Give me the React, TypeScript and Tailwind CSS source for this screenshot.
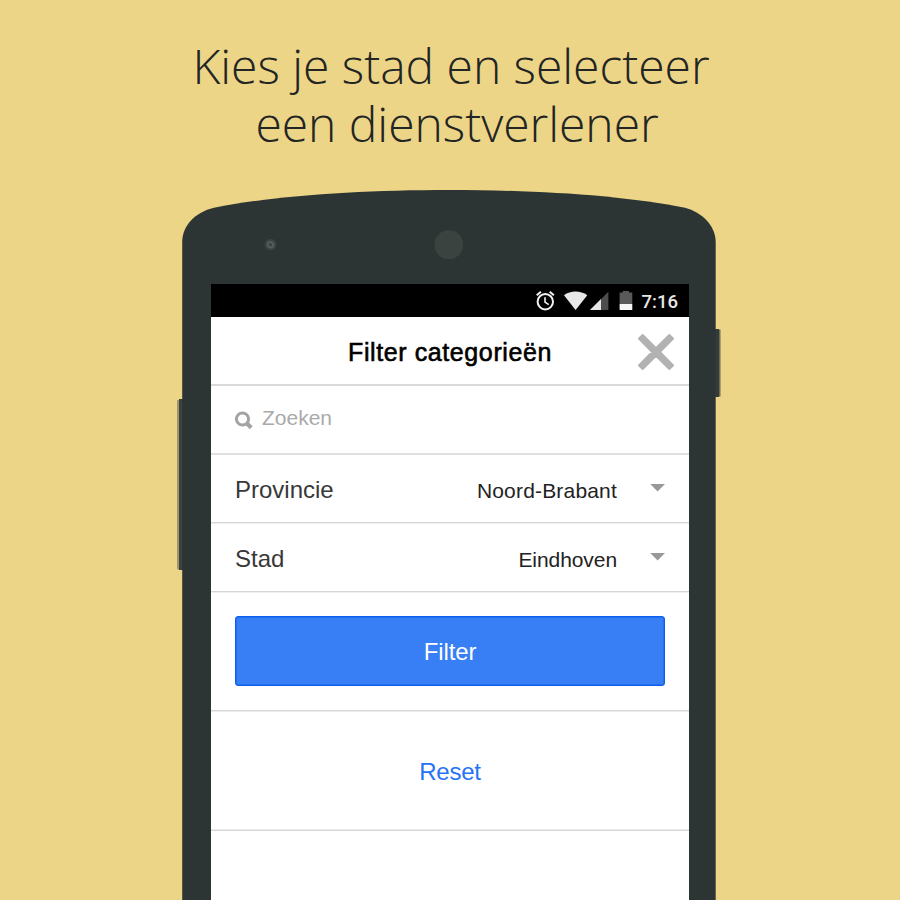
import React from "react";

function PhoneBody() {
  return (
    <svg className="absolute inset-0" width="544" height="710" viewBox="177 190 544 710" aria-hidden="true">
      <rect x="177" y="400" width="6" height="169.500" rx="1" fill="#a19669" />
      <rect x="179" y="399" width="5" height="171" fill="#3b4341" />
      <rect x="714" y="329" width="5" height="68" fill="#343c3a" />
      <rect x="719" y="329.500" width="1.500" height="67" fill="#6e6b52" />
      <path
        d="M182.200 900V242C182.200 226 195 212 214 207.700C276 195.500 360 190 449 190C538 190 622 195.500 685 207.700C702 212 715.700 226 715.700 242V900Z"
        fill="#2d3534"
      />
      <circle cx="448.800" cy="244.700" r="14.400" fill="#3b4341" />
      <circle cx="270.500" cy="244.700" r="5.900" fill="#3b4341" />
      <circle cx="270.500" cy="244.700" r="2.700" fill="none" stroke="#525b58" strokeWidth="2.100" />
    </svg>
  );
}

function StatusBar() {
  return (
    <div className="flex h-[33px] items-start justify-end bg-black pr-[11px]">
      <svg className="mt-[6px]" width="101" height="22" viewBox="535 290 101 22" aria-hidden="true">
        <g fill="none" stroke="#f1f1f1">
          <circle cx="545.300" cy="301.700" r="7.700" strokeWidth="2" />
          <path d="M536.700 295.300L540.900 291.800M553.900 295.300L549.700 291.800" strokeWidth="2" />
          <path d="M545 297.300V302.200L548.700 304.700" strokeWidth="1.600" />
        </g>
        <path d="M564 295.300C570.500 290.300 580.500 290.300 587.300 295.300L575.600 310Z" fill="#e8e8e8" />
        <path d="M608.400 291.700V310H590Z" fill="#4d4d4d" />
        <path d="M601 299.100V310H590Z" fill="#e8e8e8" />
        <path d="M622.800 292.500V291H629V292.500H632.300V304H619.600V292.500Z" fill="#595959" />
        <path d="M619.600 304H632.300V310H619.600Z" fill="#f5f5f5" />
      </svg>
      <span className="ml-[6px] mt-[7px] font-['Roboto',sans-serif] text-[18.500px] font-medium leading-[23px] text-[#e8e8e8]">
        7:16
      </span>
    </div>
  );
}

function SelectRow({ label, value, className }: { label: string; value: string; className: string }) {
  return (
    <div className={`flex items-start border-b border-[#d6d6d6] px-6 shadow-[0_1px_0_#f0f0f0] ${className}`}>
      <span className="mt-[21px] text-[24px] leading-[28px] tracking-normal text-[#383838]">{label}</span>
      <span className="ml-auto mt-[24px] text-[21px] leading-[24px] text-[#222]">{value}</span>
      <svg className="ml-[32px] mt-[29px]" width="16" height="8" viewBox="0 0 16 8" aria-hidden="true">
        <path d="M1.200 0H16L8.600 7.400Z" fill="#999" />
      </svg>
    </div>
  );
}

export default function App() {
  return (
    <main className="flex h-[900px] w-[900px] flex-col overflow-hidden bg-[#edd588] font-['Liberation_Sans',Arial,sans-serif]">
      <h1 className="flex h-[190px] flex-col items-center whitespace-nowrap pl-[14px] pt-[37px] font-['Open_Sans',sans-serif] text-[48px] font-light leading-[57.600px] text-[#222524]">
        <span className="mr-[12px] block h-[57.600px] tracking-[-0.030px]">Kies je stad en selecteer</span>
        <span className="block h-[57.600px] tracking-[-0.030px]">een dienstverlener</span>
      </h1>
      <section className="relative ml-[177px] h-[710px] w-[544px] pl-[34px] pt-[94px]">
        <PhoneBody />
        <div className="relative h-[616px] w-[478px] bg-white">
          <StatusBar />
          <header className="relative flex h-[69px] items-center justify-center border-b-2 border-[#dadada]">
            <h2 className="mt-[2px] text-[25px] leading-[30px] tracking-[0.600px] text-black [-webkit-text-stroke:0.600px_black]">
              Filter categorieën
            </h2>
            <svg className="absolute right-[14px] top-[16px]" width="38" height="38" viewBox="0 0 38 38" aria-label="Sluiten">
              <path
                d="M5.700 2.300L19 15.600L32.300 2.300L35.700 5.700L22.400 19L35.700 32.300L32.300 35.700L19 22.400L5.700 35.700L2.300 32.300L15.600 19L2.300 5.700Z"
                fill="#b2b2b2"
                stroke="#b2b2b2"
                strokeWidth="2.600"
                strokeLinejoin="round"
              />
            </svg>
          </header>
          <label className="flex h-[69px] items-start border-b-2 border-[#e0e0e0] px-6">
            <svg className="mt-[25px]" width="18" height="19" viewBox="0 0 18 19" aria-hidden="true">
              <circle cx="7.500" cy="8" r="6.100" fill="none" stroke="#a3a3a3" strokeWidth="3" />
              <path d="M11.500 12L16.200 16.700" stroke="#a3a3a3" strokeWidth="4.200" />
            </svg>
            <span className="ml-[9px] mt-[20px] text-[21px] leading-[24px] text-[#aaa]">Zoeken</span>
          </label>
          <SelectRow label="Provincie" value="Noord-Brabant" className="h-[68px] tracking-[0.180px]" />
          <SelectRow label="Stad" value="Eindhoven" className="h-[69px] pt-px tracking-[-0.070px]" />
          <div className="h-[119px] border-b border-[#d6d6d6] px-6 pt-[24px] shadow-[0_1px_0_#ececec]">
            <button className="h-[70px] w-full rounded-[3px] border border-[#0c60ee] bg-[#387ef5] pt-[2px] text-[24px] tracking-[-0.100px] text-white shadow-[inset_0_0_0_0.500px_#0c60ee]">
              Filter
            </button>
          </div>
          <div className="flex h-[120px] items-center justify-center border-b border-[#d6d6d6] shadow-[inset_0_-1px_0_#ececec]">
            <button className="mt-[2px] text-[24px] tracking-[-0.200px] text-[#2673f5]">Reset</button>
          </div>
        </div>
      </section>
    </main>
  );
}
